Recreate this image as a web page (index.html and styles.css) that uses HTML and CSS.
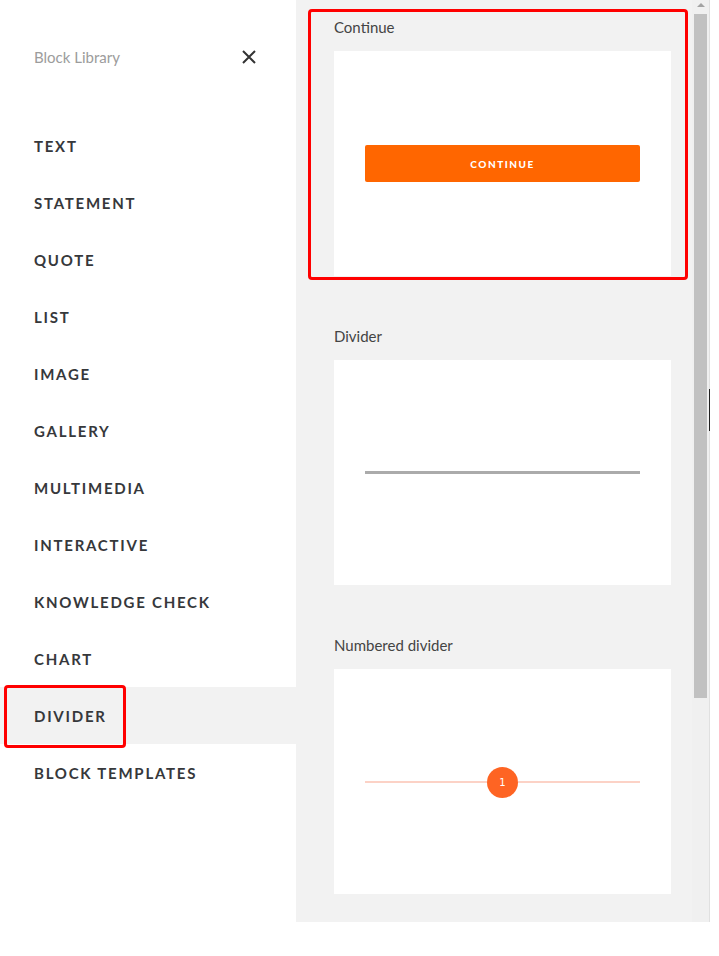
FILE: index.html
```html
<!DOCTYPE html>
<html lang="en">
<head>
<meta charset="utf-8">
<title>Block Library</title>
<link rel="stylesheet" href="styles.css">
</head>
<body>
<div class="app">
  <aside class="sidebar">
    <header class="sidebar-head">
      <span class="sidebar-title">Block Library</span>
      <button class="close" aria-label="Close">
        <svg width="14" height="14" viewBox="0 0 14 14"><path d="M1 1L13 13M13 1L1 13" stroke="#333" stroke-width="2" fill="none"/></svg>
      </button>
    </header>
    <nav class="menu">
      <div class="menu-item">TEXT</div>
      <div class="menu-item">STATEMENT</div>
      <div class="menu-item">QUOTE</div>
      <div class="menu-item">LIST</div>
      <div class="menu-item">IMAGE</div>
      <div class="menu-item">GALLERY</div>
      <div class="menu-item">MULTIMEDIA</div>
      <div class="menu-item">INTERACTIVE</div>
      <div class="menu-item">KNOWLEDGE CHECK</div>
      <div class="menu-item">CHART</div>
      <div class="menu-item active">DIVIDER<span class="highlight highlight-menu"></span></div>
      <div class="menu-item">BLOCK TEMPLATES</div>
    </nav>
  </aside>
  <section class="panel">
    <div class="panel-content">
      <div class="block">
        <div class="block-label">Continue</div>
        <div class="card">
          <div class="continue-btn">CONTINUE</div>
        </div>
      </div>
      <div class="block">
        <div class="block-label">Divider</div>
        <div class="card">
          <div class="rule"></div>
        </div>
      </div>
      <div class="block">
        <div class="block-label">Numbered divider</div>
        <div class="card">
          <div class="numbered">
            <span class="num-line"></span>
            <span class="num-circle">1</span>
            <span class="num-line"></span>
          </div>
        </div>
      </div>
    </div>
    <div class="scrollbar">
      <span class="scroll-arrow"></span>
      <span class="scroll-thumb"></span>
    </div>
    <span class="highlight highlight-card"></span>
  </section>
  <div class="edge"><span class="edge-mark"></span></div>
</div>
</body>
</html>
```
FILE: styles.css
```css
html, body {
  margin: 0;
  padding: 0;
  background: #fff;
}
body {
  font-family: Lato, "Open Sans", "Liberation Sans", sans-serif;
  color: #333;
}
.app {
  display: flex;
  align-items: flex-start;
  width: 719px;
  height: 956px;
  overflow: hidden;
}
.sidebar {
  width: 296px;
  flex: none;
}
.sidebar-head {
  display: flex;
  align-items: center;
  justify-content: space-between;
  height: 34px;
  margin-top: 40px;
  padding: 0 40px 0 34px;
}
.sidebar-title {
  font-size: 15px;
  color: #9c9c9c;
}
.close {
  border: 0;
  background: none;
  padding: 0;
  width: 14px;
  height: 14px;
  display: flex;
  cursor: pointer;
}
.menu {
  display: flex;
  flex-direction: column;
  margin-top: 43px;
}
.menu-item {
  position: relative;
  height: 57px;
  display: flex;
  align-items: center;
  padding-left: 34px;
  font-size: 15px;
  font-weight: 700;
  letter-spacing: 1.75px;
  color: #36383b;
}
.menu-item.active {
  background: #f2f2f2;
}
.highlight {
  position: absolute;
  border: 3px solid #f00;
  border-radius: 4px;
  box-sizing: border-box;
  pointer-events: none;
}
.highlight-menu {
  left: 4px;
  top: -2px;
  width: 122px;
  height: 63px;
}
.panel {
  position: relative;
  display: flex;
  width: 413px;
  height: 922px;
  flex: none;
  background: #f2f2f2;
}
.panel-content {
  width: 394px;
  padding: 15px 0 0 38px;
  box-sizing: border-box;
  display: flex;
  flex-direction: column;
  gap: 48px;
}
.block-label {
  height: 24px;
  line-height: 24px;
  font-size: 15px;
  color: #444;
  margin-bottom: 12px;
}
.card {
  width: 337px;
  height: 225px;
  background: #fff;
  display: flex;
  align-items: center;
  justify-content: center;
}
.continue-btn {
  width: 275px;
  height: 37px;
  background: #ff6600;
  border-radius: 2px;
  color: #fff;
  font-size: 10px;
  font-weight: 900;
  letter-spacing: 1.5px;
  display: flex;
  align-items: center;
  justify-content: center;
}
.rule {
  width: 275px;
  height: 3px;
  background: #ababab;
}
.numbered {
  width: 275px;
  display: flex;
  align-items: center;
}
.num-line {
  flex: 1;
  height: 2px;
  background: #fcd2c6;
}
.num-circle {
  width: 31px;
  height: 31px;
  border-radius: 50%;
  background: #fe6423;
  color: #fff;
  font-family: "DejaVu Sans", "Liberation Sans", sans-serif;
  font-size: 10px;
  display: flex;
  align-items: center;
  justify-content: center;
  margin-top: 1px;
}
.scrollbar {
  position: relative;
  width: 17px;
  margin-left: 2px;
  background: #f0f0f0;
  display: flex;
  flex-direction: column;
  align-items: center;
}
.scroll-arrow {
  margin-top: 3px;
  width: 0;
  height: 0;
  border-left: 4px solid transparent;
  border-right: 4px solid transparent;
  border-bottom: 4px solid #a3a3a3;
}
.scroll-thumb {
  margin-top: 7px;
  width: 13px;
  height: 684px;
  background: #c1c1c1;
}
.highlight-card {
  left: 12px;
  top: 9px;
  width: 380px;
  height: 271px;
}
.edge {
  width: 1px;
  height: 922px;
  background: #e0e0e0;
  display: flex;
  flex-direction: column;
}
.edge-mark {
  margin-top: 389px;
  height: 42px;
  background: #222;
}
```
